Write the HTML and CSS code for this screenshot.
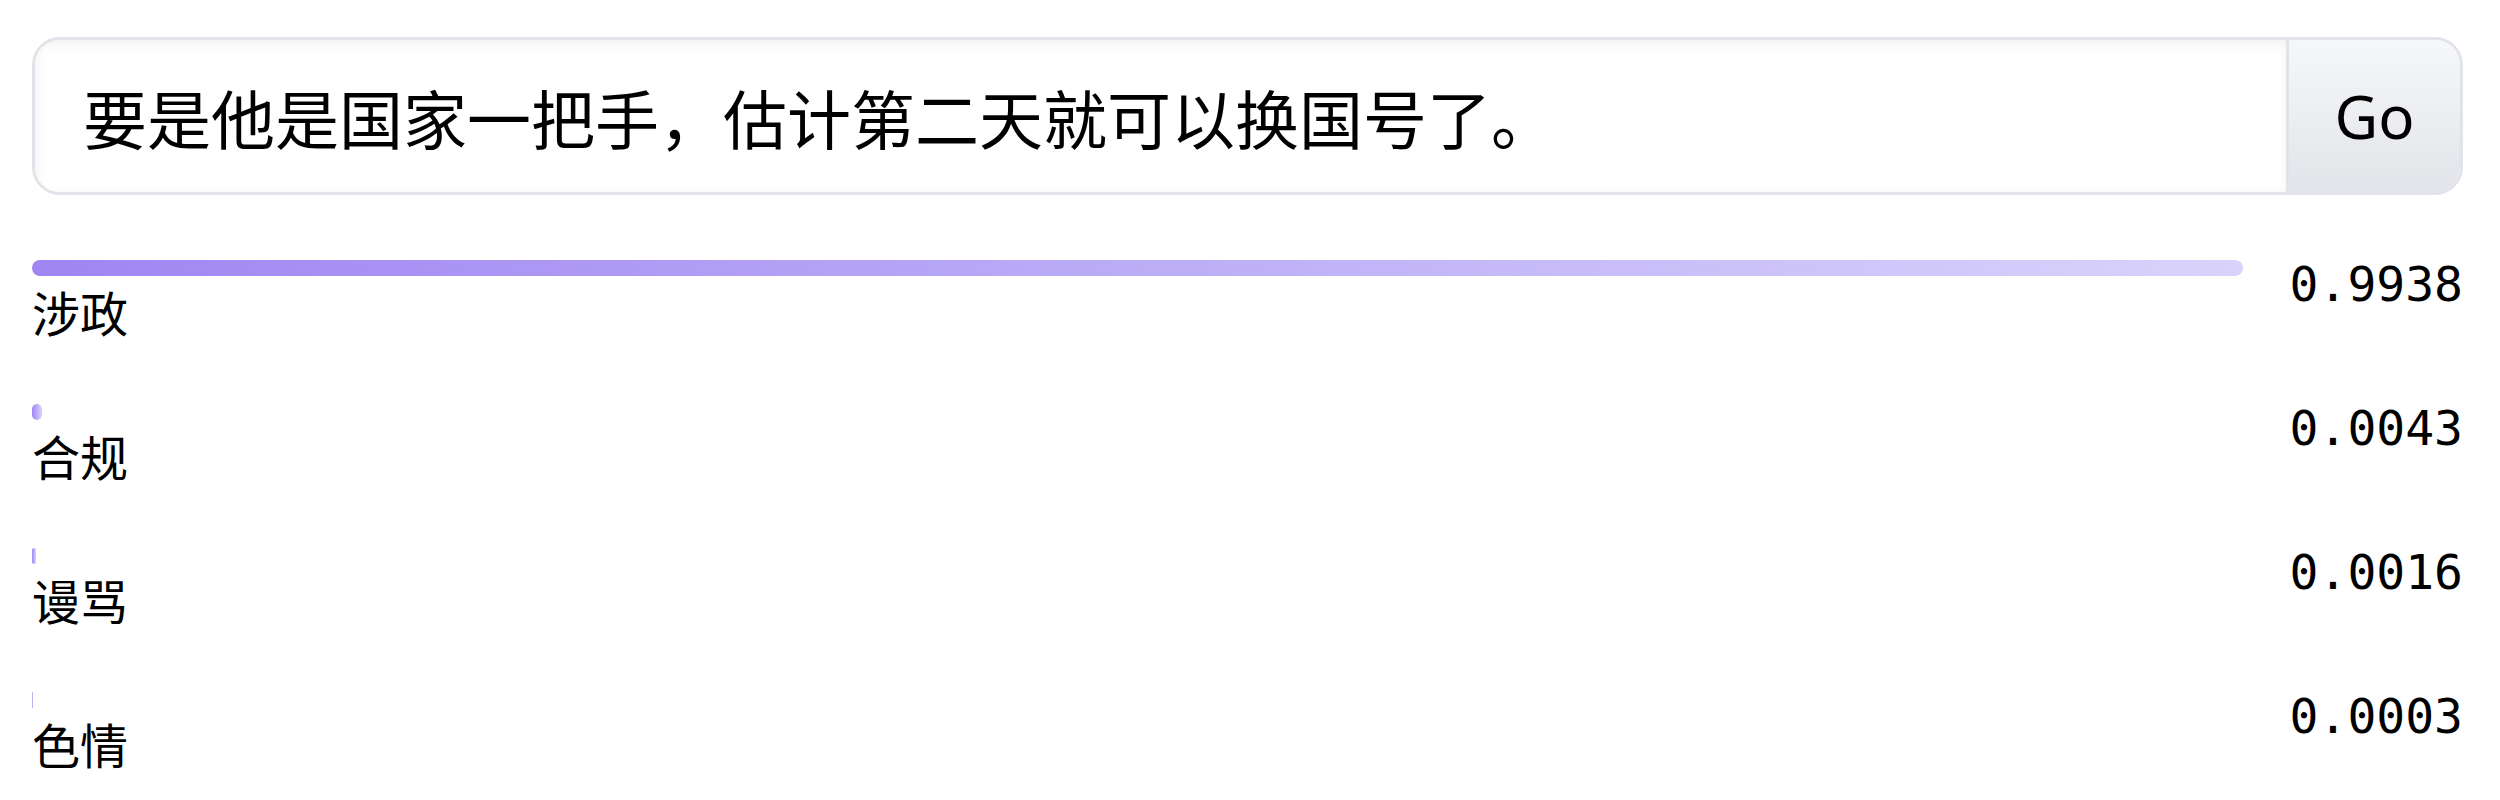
FILE: index.html
```html
<!DOCTYPE html>
<html lang="zh-CN">
<head>
<meta charset="utf-8">
<title>Classifier</title>
<link rel="stylesheet" href="styles.css">
</head>
<body>
<div class="app">
  <form class="search" onsubmit="return false">
    <input class="query" type="text" value="要是他是国家一把手，估计第二天就可以换国号了。">
    <button class="go" type="submit">Go</button>
  </form>
  <div class="results">
    <div class="row">
      <div class="main">
        <div class="track"><div class="bar" style="width:99.38%"></div></div>
        <div class="label">涉政</div>
      </div>
      <div class="score">0.9938</div>
    </div>
    <div class="row">
      <div class="main">
        <div class="track"><div class="bar" style="width:0.43%"></div></div>
        <div class="label">合规</div>
      </div>
      <div class="score">0.0043</div>
    </div>
    <div class="row">
      <div class="main">
        <div class="track"><div class="bar" style="width:0.16%"></div></div>
        <div class="label">谩骂</div>
      </div>
      <div class="score">0.0016</div>
    </div>
    <div class="row">
      <div class="main">
        <div class="track"><div class="bar" style="width:0.03%"></div></div>
        <div class="label">色情</div>
      </div>
      <div class="score">0.0003</div>
    </div>
  </div>
</div>
</body>
</html>
```
FILE: styles.css
```css
html, body {
  margin: 0;
  background: #fff;
}

body {
  font-family: "Noto Sans", "Noto Sans CJK SC", sans-serif;
  color: #000;
}

.app {
  padding: 37px 37px 0 32px;
}

.search {
  display: flex;
  height: 158px;
  box-sizing: border-box;
  margin: 0;
  border: 3px solid #e2e3ea;
  border-radius: 28px;
  overflow: hidden;
  background: #fff;
}

.query {
  flex: 1;
  min-width: 0;
  border: 0;
  outline: 0;
  margin: 0;
  padding: 0 48px;
  font-family: "Noto Sans CJK SC", sans-serif;
  font-size: 64px;
  color: #000;
  background: #fff;
  box-shadow: inset 0 5px 14px rgba(0, 0, 0, 0.045), inset 5px 0 12px rgba(0, 0, 0, 0.02);
}

.go {
  width: 174px;
  box-sizing: border-box;
  margin: 0;
  border: 0;
  border-left: 3px solid #e2e3ea;
  background: linear-gradient(#f6f7f9, #e3e4e9);
  font-family: "Noto Sans", sans-serif;
  font-size: 60px;
  color: #000;
  padding: 0;
}

.results {
  margin-top: 65px;
}

.row {
  display: flex;
  align-items: flex-start;
  margin-bottom: 58px;
}

.main {
  flex: 1;
  min-width: 0;
}

.track {
  height: 16px;
}

.bar {
  height: 16px;
  border-radius: 8px;
  background: linear-gradient(90deg, #9e86f2, #d9d3fb);
}

.label {
  margin-top: 0;
  font-family: "Noto Sans CJK SC", sans-serif;
  font-size: 48px;
  line-height: 70px;
  color: #000;
}

.score {
  width: 182px;
  margin-left: 24px;
  text-align: right;
  font-family: "DejaVu Sans Mono", monospace;
  font-size: 48px;
  line-height: 49px;
  color: #000;
}
```
